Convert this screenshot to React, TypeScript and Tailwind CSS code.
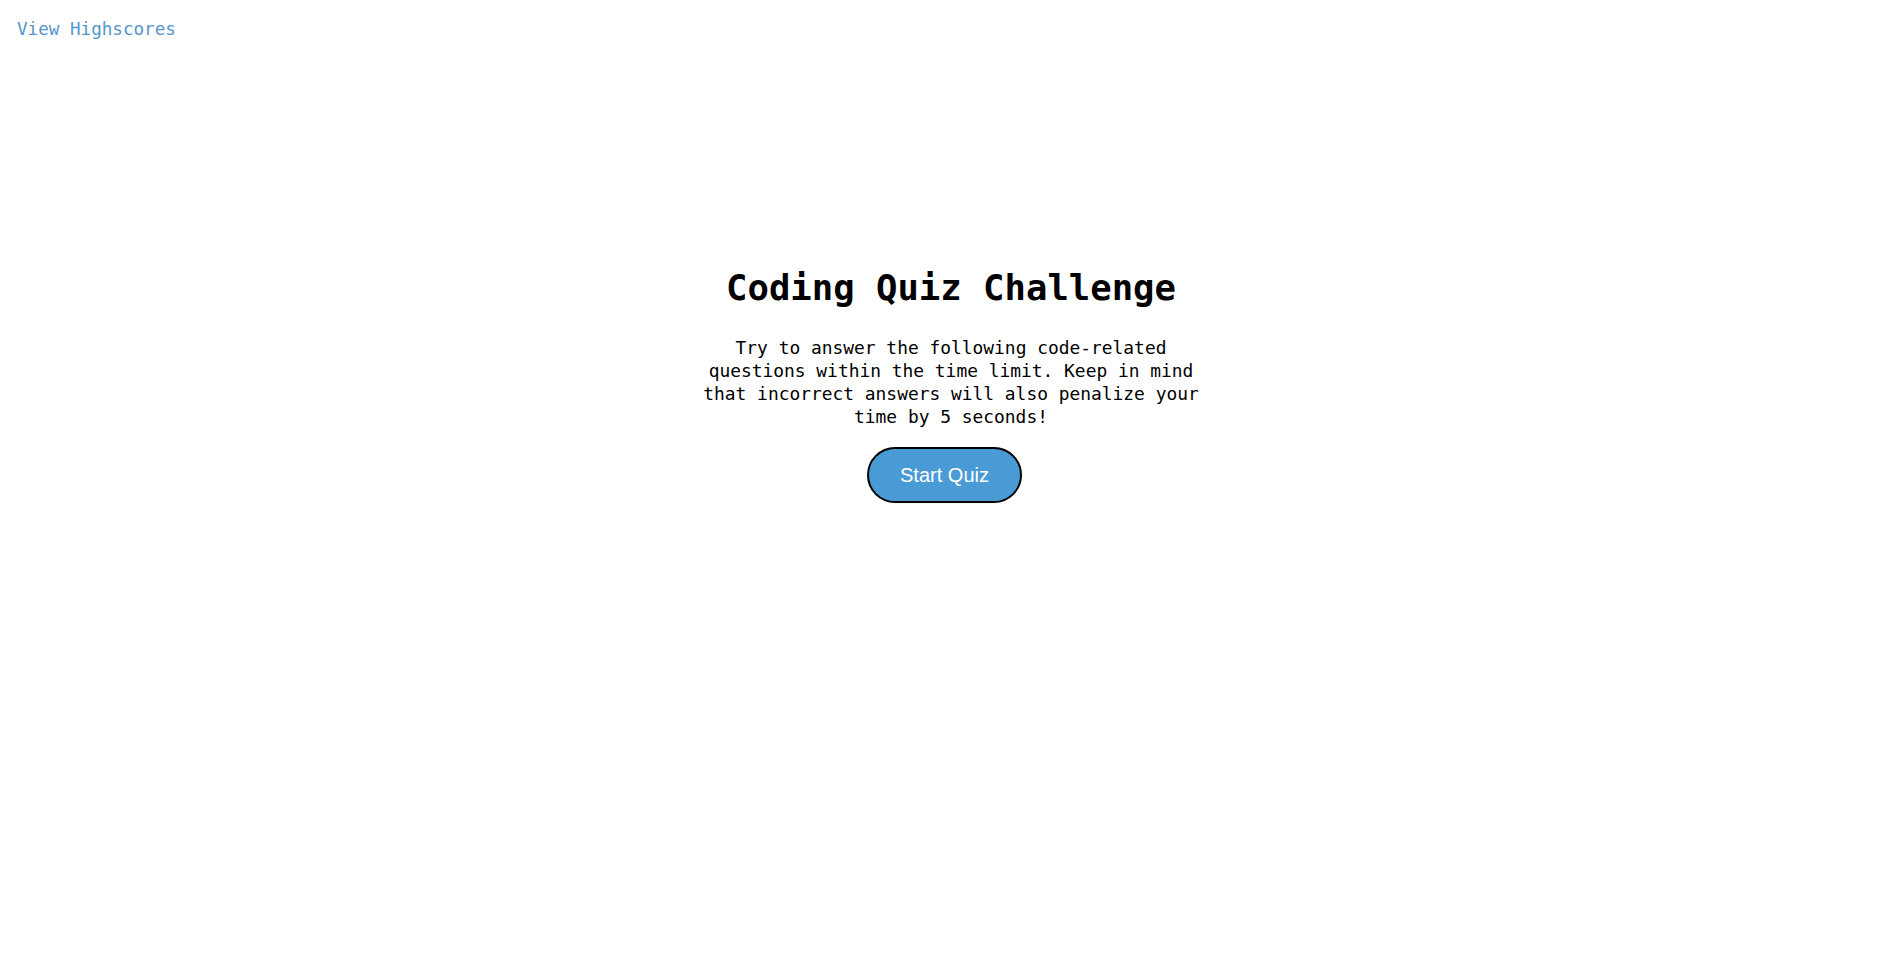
import React from "react"

const mono = { fontFamily: '"DejaVu Sans Mono", "Liberation Mono", monospace' }

function App() {
  return (
    <div className="min-h-[958px] w-full bg-white text-black" style={mono}>
      <header className="px-[17px] pt-[18px]">
        <a href="#" className="text-[17.6px] leading-[21px] text-[#5795cc]">
          View Highscores
        </a>
      </header>
      <main className="flex flex-col items-center pt-[226px]">
        <h1 className="text-[35.6px] font-bold leading-[40px]">Coding Quiz Challenge</h1>
        <p className="mt-[28px] w-[510px] text-center text-[17.9px] leading-[23px]">
          Try to answer the following code-related questions within the time limit. Keep in mind
          that incorrect answers will also penalize your time by 5 seconds!
        </p>
        <button
          className="mr-[13px] mt-[19px] h-[56px] w-[155px] rounded-full border-2 border-black bg-[#4a9bd5] text-[20px] text-white"
          style={{ fontFamily: '"Liberation Sans", Arial, sans-serif' }}
        >
          Start Quiz
        </button>
      </main>
    </div>
  )
}

export default App
